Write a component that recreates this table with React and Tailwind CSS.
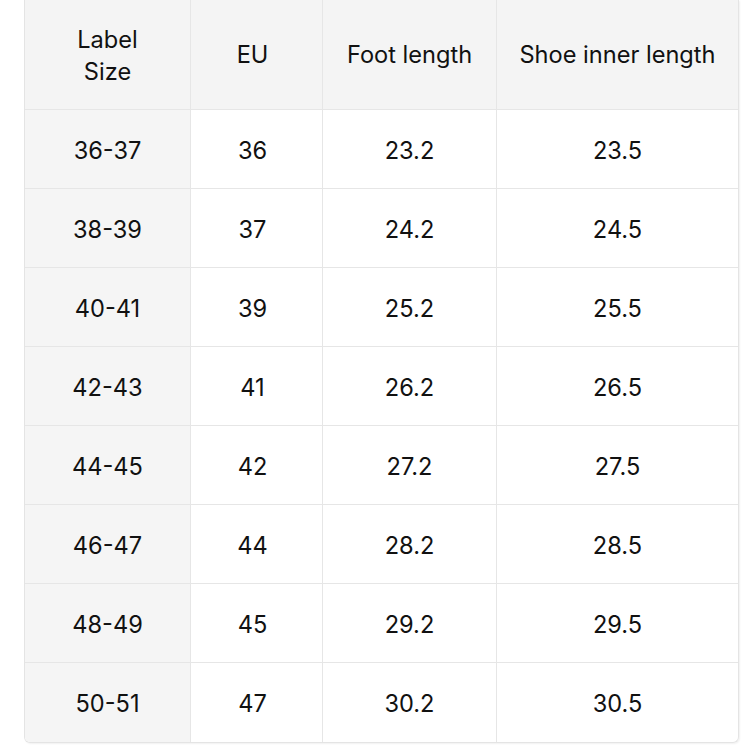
import React from 'react';

const rows = [
    ['36-37', '36', '23.2', '23.5'],
    ['38-39', '37', '24.2', '24.5'],
    ['40-41', '39', '25.2', '25.5'],
    ['42-43', '41', '26.2', '26.5'],
    ['44-45', '42', '27.2', '27.5'],
    ['46-47', '44', '28.2', '28.5'],
    ['48-49', '45', '29.2', '29.5'],
    ['50-51', '47', '30.2', '30.5'],
];

const App = () => {
    return (
        <div className="w-[750px] h-[750px] bg-white overflow-hidden font-['Inter',sans-serif] text-[23.6px] text-[#111111]">
            <div className="ml-[24px] w-[715px] border border-t-0 border-[#e4e4e4] rounded-b-[6px] overflow-hidden shadow-[1px_1px_2px_rgba(0,0,0,0.06)]">
                <div className="grid grid-cols-[166px_132px_174px_241px]">
                    {/* Header */}
                    <div className="h-[110px] bg-[#f4f4f4] border-r border-b border-[#e6e6e6] flex items-center justify-center text-center leading-[32px] pt-[2px]">
                        Label<br />Size
                    </div>
                    <div className="h-[110px] bg-[#f4f4f4] border-r border-b border-[#e6e6e6] flex items-center justify-center pr-[8px]">EU</div>
                    <div className="h-[110px] bg-[#f4f4f4] border-r border-b border-[#e6e6e6] flex items-center justify-center">Foot length</div>
                    <div className="h-[110px] bg-[#f4f4f4] border-b border-[#e6e6e6] flex items-center justify-center">Shoe inner length</div>

                    {/* Rows */}
                    {rows.map((r, i) => {
                        const last = i === rows.length - 1;
                        return (
                            <React.Fragment key={r[0]}>
                                <div className={`h-[79px] bg-[#f5f5f5] border-r border-[#e6e6e6] flex items-center justify-center pt-[3px] ${last ? '' : 'border-b'}`}>{r[0]}</div>
                                <div className={`h-[79px] border-r border-[#e6e6e6] flex items-center justify-center pt-[3px] pr-[8px] ${last ? '' : 'border-b'}`}>{r[1]}</div>
                                <div className={`h-[79px] border-r border-[#e6e6e6] flex items-center justify-center pt-[3px] ${last ? '' : 'border-b'}`}>{r[2]}</div>
                                <div className={`h-[79px] border-[#e6e6e6] flex items-center justify-center pt-[3px] ${last ? '' : 'border-b'}`}>{r[3]}</div>
                            </React.Fragment>
                        );
                    })}
                </div>
            </div>
        </div>
    );
};

export default App;
